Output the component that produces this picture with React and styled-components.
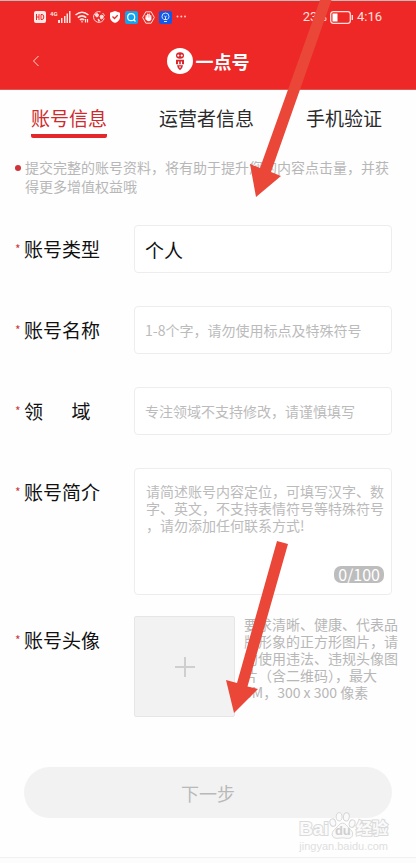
import { useState } from "react"
import styled, { createGlobalStyle } from "styled-components"

const TABS = ["账号信息", "运营者信息", "手机验证"]
const MAX_INTRO = 100

const App = () => {
  const [tab, setTab] = useState(TABS[0])
  const [intro, setIntro] = useState("")

  return (
    <Page>
      <GlobalStyle />
      <Header>
        <StatusBar />
        <Nav>
          <BackButton type="button" aria-label="返回">
            <svg width="8" height="12" viewBox="0 0 8 12" fill="none" stroke="#ffd9d6">
              <path d="M6.5 1 1.5 6l5 5" />
            </svg>
          </BackButton>
          <Brand>
            <BrandMark />
            一点号
          </Brand>
        </Nav>
      </Header>

      <Tabs>
        {TABS.map((name) => (
          <Tab key={name} type="button" $active={name === tab} onClick={() => setTab(name)}>
            {name}
          </Tab>
        ))}
      </Tabs>

      <Notice>
        <Bullet />
        <p>提交完整的账号资料，将有助于提升您的内容点击量，并获得更多增值权益哦</p>
      </Notice>

      <Form onSubmit={(event) => event.preventDefault()}>
        <Row>
          <FieldLabel id="type">账号类型</FieldLabel>
          <Select id="type" defaultValue="个人">
            <option>个人</option>
          </Select>
        </Row>
        <Row>
          <FieldLabel id="name">账号名称</FieldLabel>
          <Input id="name" placeholder="1-8个字，请勿使用标点及特殊符号" />
        </Row>
        <Row>
          <FieldLabel id="field">领&emsp;&ensp;域</FieldLabel>
          <Input id="field" placeholder="专注领域不支持修改，请谨慎填写" />
        </Row>
        <Row>
          <FieldLabel id="intro">账号简介</FieldLabel>
          <IntroBox>
            <Textarea
              id="intro"
              maxLength={MAX_INTRO}
              value={intro}
              onChange={(event) => setIntro(event.target.value)}
              placeholder="请简述账号内容定位，可填写汉字、数字、英文，不支持表情符号等特殊符号，请勿添加任何联系方式!"
            />
            <Counter>
              {intro.length}/{MAX_INTRO}
            </Counter>
          </IntroBox>
        </Row>
        <AvatarRow>
          <FieldLabel id="avatar">账号头像</FieldLabel>
          <Upload id="avatar" type="button">
            <svg width="20" height="20" viewBox="0 0 20 20" stroke="#cfcfcf" strokeWidth="2">
              <path d="M10 0v20M0 10h20" />
            </svg>
          </Upload>
          <Help>
            要求清晰、健康、代表品牌形象的正方形图片，请勿使用违法、违规头像图片（含二维码），最大
            5M，300 x 300 像素
          </Help>
        </AvatarRow>
        <Submit type="submit">下一步</Submit>
      </Form>

      <Footer />
      <Watermark />

      <Arrow $left={250} $top={0} width="83" height="198" viewBox="250 0 83 198">
        <path d="M320 0h11.500L271 172l10 4-25 21-6-33 10 4z" />
      </Arrow>
      <Arrow $left={226} $top={540} width="63" height="174" viewBox="226 540 63 174">
        <path d="M277 541l11 3-40.500 142.500L258 689l-24 24-8-33 11 3z" />
      </Arrow>
    </Page>
  )
}

const FieldLabel = ({ id, children }) => (
  <Label htmlFor={id}>
    <Star>*</Star>
    {children}
  </Label>
)

const StatusBar = () => (
  <Status>
    <StatusIcons>
      <svg width="12" height="12" viewBox="0 0 12 12">
        <rect width="12" height="12" rx="2" fill="#ffe9e7" />
        <path
          d="M2.500 3v6M5 3v6M2.500 6H5M7 3.500v5h1q1.800 0 1.800-2.500T8 3.500z"
          fill="none"
          stroke="#ed2827"
        />
      </svg>
      <Signal>
        <small>4G</small>
        <svg width="13" height="12" viewBox="0 0 13 12" fill="#ffe0dd">
          <path d="M0 9h2v3H0zM3 7h1.500v5H3zM6 5h1.500v7H6zM8.500 2.500H10V12H8.500zM11 0h1.500v12H11z" />
        </svg>
      </Signal>
      <svg width="14" height="12" viewBox="0 0 14 12" fill="none" stroke="#ffe9e7" strokeWidth="1.500">
        <path d="M.5 4q6.500-5.500 13 0M2.800 6.600q4.200-3.500 8.400 0M4.800 9q2.200-1.800 4.400 0" />
        <path d="M7 9.500v2M10.500 8v3.500M12.500 8v3.500" strokeWidth="1.200" />
      </svg>
      <svg width="12" height="12" viewBox="0 0 12 12" fill="none" stroke="#ffe0dd">
        <path d="M7.500.8a5.400 5.400 0 1 0 3.700 6.500M9.500 2a5.400 5.400 0 0 1 1.900 3" />
        <path d="M2 3.500 4 2.500l1.500 1L5 5.500 3.500 6zM7 5l2-1 1.500 1.500-1 2-1.500.5zM5 8l1.500 1L6 10.500z" fill="#ffe0dd" />
      </svg>
      <svg width="12" height="12" viewBox="0 0 12 12">
        <path d="M6 0l5 1.800v4.400Q11 10 6 12 1 10 1 6.200V1.800z" fill="#fff" />
        <path d="M3.500 5.500 5.500 7.500 8.700 4.300" fill="none" stroke="#ed2827" strokeWidth="1.300" />
      </svg>
      <svg width="13" height="13" viewBox="0 0 13 13" fill="none" stroke="#fff" strokeWidth="1.200">
        <rect width="13" height="13" rx="2" fill="#12a5ee" stroke="none" />
        <circle cx="6.200" cy="6.200" r="3.500" />
        <path d="M8.500 8.500 10.500 10.500" />
      </svg>
      <svg width="13" height="13" viewBox="0 0 13 13">
        <path d="M3.800.8h5.400L12.300 6.500 9.200 12.200H3.800L.7 6.500z" fill="none" stroke="#ffe0dd" />
        <path
          d="M4.200 8V4.500M5.700 6.500V3.200M7.200 6.500V3.200M8.700 7V4.500"
          stroke="#fff"
          strokeWidth="1.200"
          strokeLinecap="round"
        />
        <path d="M3.600 6.500h5.700v1.700q-.5 2-2.400 2-2 0-3.300-2.200z" fill="#fff" />
      </svg>
      <svg width="13" height="13" viewBox="0 0 13 13" fill="none" stroke="#d4e4ff">
        <rect width="13" height="13" rx="2" fill="#1458e6" stroke="none" />
        <path d="M4.800 8.500Q3 7.200 3 5.500a3.500 3.500 0 0 1 7 0q0 1.700-1.800 3z" />
        <path d="M5 10.500h3M6.500 8V5.500M5.300 5l1.200 1 1.200-1" />
      </svg>
      <svg width="11" height="12" viewBox="0 0 11 12" fill="#ffc9c5">
        <circle cx="1.500" cy="5.500" r="1" />
        <circle cx="5.300" cy="5.500" r="1" />
        <circle cx="9" cy="5.500" r="1" />
      </svg>
    </StatusIcons>
    <StatusInfo>
      23%
      <svg width="24" height="13" viewBox="0 0 24 13">
        <rect x=".7" y=".7" width="19.600" height="11.600" rx="2.500" fill="none" stroke="#ffe0dd" strokeWidth="1.300" />
        <rect x="2.500" y="2.500" width="5" height="8" fill="#fff" />
        <path d="M22.300 4v5" stroke="#ffe0dd" strokeWidth="1.400" />
      </svg>
      4:16
    </StatusInfo>
  </Status>
)

const BrandMark = () => (
  <svg width="26" height="26" viewBox="0 0 26 26">
    <circle cx="13" cy="13" r="13" fill="#fff" />
    <g fill="#d9262b">
      <path d="M9 7.500Q9 4.300 13 4.300t4 3.200q0 3.300-4 3.300T9 7.500z" />
      <path d="M9 11.800h8v4.500H9zM10 17.200h6q0 2.300-3 5-3-2.700-3-5z" />
    </g>
    <g fill="#fff">
      <circle cx="11.300" cy="7.600" r="1.100" />
      <circle cx="14.700" cy="7.600" r="1.100" />
      <path d="M11 13.500h1.200v3H11zM13.800 13.500H15v3h-1.200zM12 18.500h2v1h-2z" />
    </g>
  </svg>
)

const Paw = ({ size }) => (
  <svg width={size} height={size} viewBox="0 0 28 28" fill="#fafafa" stroke="#d6d6d6">
    <ellipse cx="4" cy="11" rx="3" ry="4" transform="rotate(-15 4 11)" />
    <ellipse cx="10.500" cy="5" rx="3" ry="4.300" />
    <ellipse cx="18" cy="5" rx="3" ry="4.300" transform="rotate(8 18 5)" />
    <ellipse cx="24" cy="12" rx="3" ry="4" transform="rotate(15 24 12)" />
    <path d="M14 11.500c3 0 4.500 3 6.500 5s4.500 3.500 4 7-3.500 4-6 3.800-3-.5-4.500-.5-2.500.4-5 .5-5.500-.8-5.800-3.800 2.300-5 4.300-7 3.500-5 6.500-5z" />
  </svg>
)

const Watermark = () => (
  <Mark aria-hidden="true">
    <MarkLine>
      <MarkText>Bai</MarkText>
      <MarkPaw>
        <Paw size={27} />
        <MarkDu>du</MarkDu>
      </MarkPaw>
      <MarkText $cjk>经验</MarkText>
    </MarkLine>
    <MarkUrl>jingyan.baidu.com</MarkUrl>
  </Mark>
)

export default App

const GlobalStyle = createGlobalStyle`
  * {
    box-sizing: border-box;
  }
  body {
    margin: 0;
    background: #fefefe;
    font-family: "Noto Sans CJK SC", sans-serif;
  }
  button,
  input,
  select,
  textarea {
    font-family: inherit;
  }
  p {
    margin: 0;
  }
  svg {
    display: block;
    flex: none;
  }
`

const Page = styled.main`
  position: relative;
  display: flex;
  flex-direction: column;
  min-height: 100vh;
  overflow: hidden;
`

const Header = styled.header`
  background: #ed2827;
  border-top: 1px solid #bcbcbc;
  border-bottom: 1px solid #e2574f;
  color: #fff;
`
const Status = styled.div`
  display: flex;
  justify-content: space-between;
  align-items: center;
  height: 32px;
  padding: 0 34px;
`
const StatusIcons = styled.div`
  display: flex;
  align-items: center;
  gap: 4px;
`
const Signal = styled.span`
  display: flex;
  align-items: flex-start;

  small {
    font: 700 6px/6px Roboto, sans-serif;
    color: #ffe0dd;
  }
`
const StatusInfo = styled.div`
  display: flex;
  align-items: center;
  gap: 3px;
  font: 13px/20px Roboto, sans-serif;
  color: #ffe0dd;
`
const Nav = styled.div`
  display: grid;
  grid-template-columns: 1fr auto 1fr;
  align-items: center;
  height: 56px;
  padding: 0 24px;
`
const BackButton = styled.button`
  justify-self: start;
  padding: 8px;
  border: 0;
  background: none;
`
const Brand = styled.div`
  display: flex;
  align-items: center;
  gap: 3px;
  font-size: 18px;
  font-weight: 700;
  line-height: 26px;
`

const Tabs = styled.nav`
  display: flex;
  justify-content: space-between;
  padding: 15px 34px 0 31px;
`
const Tab = styled.button`
  padding: 0 0 3px;
  border: 0;
  border-bottom: 4px solid ${({ $active }) => ($active ? "#e3282b" : "transparent")};
  border-radius: 2px;
  background: none;
  color: ${({ $active }) => ($active ? "#cf2a2c" : "#2b2b2b")};
  font-size: 19px;
  line-height: 26px;
`

const Notice = styled.div`
  display: flex;
  gap: 4px;
  padding: 20px 24px 0 15px;
  color: #b7b7b7;
  font-size: 14px;
  line-height: 19px;
`
const Bullet = styled.i`
  flex: none;
  width: 6px;
  height: 6px;
  margin-top: 7px;
  border-radius: 50%;
  background: #d03338;
`

const Form = styled.form`
  display: flex;
  flex-direction: column;
  padding: 29px 24px 39px 15px;
`
const Row = styled.div`
  display: flex;
  align-items: flex-start;

  & + & {
    margin-top: 33px;
  }
`
const AvatarRow = styled.div`
  display: flex;
  align-items: flex-start;
  margin: 21px -9px 0 0;
`
const Label = styled.label`
  display: flex;
  flex: none;
  width: 119px;
  color: #111;
  font-size: 19px;
  line-height: 48px;
`
const Star = styled.span`
  width: 9px;
  color: #cf3a3e;
  font-size: 12px;
`
const Input = styled.input`
  flex: 1;
  min-width: 0;
  height: 48px;
  padding: 0 10px;
  border: 1px solid #ededed;
  border-radius: 4px;
  outline: 0;
  background: #fff;
  color: #111;
  font-size: 14px;

  &::placeholder {
    color: #bbb;
  }
`
const Select = styled.select`
  flex: 1;
  min-width: 0;
  height: 48px;
  padding: 0 10px;
  border: 1px solid #ededed;
  border-radius: 4px;
  outline: 0;
  appearance: none;
  background: #fff;
  color: #111;
  font-size: 19px;
`
const IntroBox = styled.div`
  display: flex;
  flex: 1;
  flex-direction: column;
  min-width: 0;
  padding: 14px 7px 11px 11px;
  border: 1px solid #ededed;
  border-radius: 4px;
  background: #fff;
`
const Textarea = styled.textarea`
  height: 83px;
  padding: 0;
  border: 0;
  outline: 0;
  resize: none;
  background: none;
  color: #111;
  font-size: 14px;
  line-height: 17px;
  line-break: anywhere;

  &::placeholder {
    color: #bbb;
  }
`
const Counter = styled.span`
  align-self: flex-end;
  padding: 0 4px;
  border-radius: 7px;
  background: #bdbdbd;
  color: #fff;
  font-size: 16px;
  line-height: 17px;
`
const Upload = styled.button`
  display: flex;
  flex: none;
  align-items: center;
  justify-content: center;
  width: 101px;
  height: 101px;
  border: 1px solid #e6e6e6;
  border-radius: 2px;
  background: #f2f2f2;
`
const Help = styled.p`
  flex: 1;
  margin-left: 9px;
  color: #b7b7b7;
  font-size: 14px;
  line-height: 17px;
`
const Submit = styled.button`
  height: 51px;
  margin: 50px 0 0 9px;
  border: 0;
  border-radius: 26px;
  background: #f2f2f2;
  color: #b9b9b9;
  font-size: 18px;
`

const Footer = styled.footer`
  flex: 1;
  border-top: 1px solid #f0f0f0;
  background: #fcfcfc;
`

const Arrow = styled.svg`
  position: absolute;
  left: ${({ $left }) => $left}px;
  top: ${({ $top }) => $top}px;
  fill: #ea4738;
  pointer-events: none;
`

const Mark = styled.div`
  position: absolute;
  right: 28px;
  bottom: 10px;
  color: #fbfbfb;
  font-family: "Liberation Sans", "Noto Sans CJK SC", sans-serif;
  pointer-events: none;
`
const MarkLine = styled.div`
  display: flex;
  align-items: flex-end;
`
const MarkText = styled.span`
  font-size: ${({ $cjk }) => ($cjk ? 16 : 19)}px;
  font-weight: 700;
  line-height: 20px;
  paint-order: stroke fill;
  -webkit-text-stroke: 2px #dadada;
`
const MarkPaw = styled.span`
  position: relative;
`
const MarkDu = styled.span`
  position: absolute;
  left: 6px;
  bottom: 2px;
  color: #cfcfcf;
  font-size: 13px;
  font-weight: 700;
  line-height: 13px;
`
const MarkUrl = styled.div`
  color: #dedede;
  font-size: 11px;
  line-height: 14px;
`
